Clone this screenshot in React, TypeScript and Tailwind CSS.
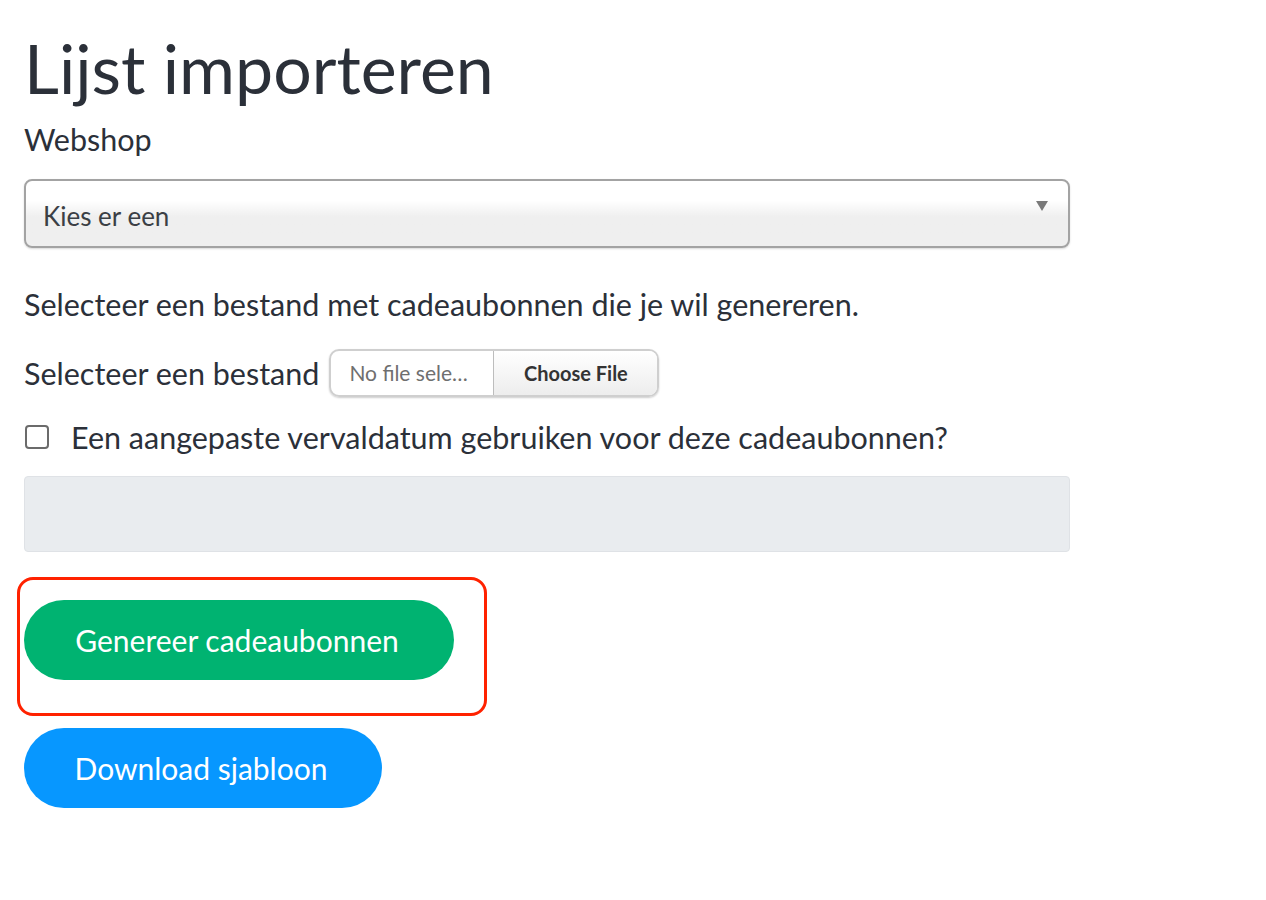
export default function App() {
  return (
    <div className="min-h-[900px] bg-white px-6 pt-[30px] text-[#2b3039]">
      <div className="w-[1046px] font-['Lato','Liberation_Sans',sans-serif]">
        <h1 className="text-[68px] leading-[76px] font-normal">Lijst importeren</h1>

        <label className="mt-[15px] block text-[30.5px] leading-[36px]">Webshop</label>

        <div className="relative mt-[22px] flex h-[69px] items-center rounded-[8px] border-2 border-[#a3a3a3] bg-gradient-to-b from-white from-30% to-[#efefef] to-55% px-[17px] pt-[5px] shadow-[0_1px_2px_rgba(0,0,0,0.15)]">
          <span className="text-[26px] text-[#3b3f45]">Kies er een</span>
          <span className="absolute right-[20px] top-[20px] h-0 w-0 border-x-[6px] border-t-[10px] border-x-transparent border-t-[#7a7a7a]" />
        </div>

        <p className="mt-[38px] text-[30.5px] leading-[36px]">
          Selecteer een bestand met cadeaubonnen die je wil genereren.
        </p>

        <div className="mt-[27px] flex items-center gap-[10px]">
          <span className="text-[30.5px] leading-[36px]">Selecteer een bestand</span>
          <div className="flex h-[48px] w-[330px] overflow-hidden rounded-[10px] border-2 border-[#cfcfcf] shadow-[0_1px_2px_rgba(0,0,0,0.2)]">
            <span className="flex w-[162px] items-center pl-[18px] text-[21px] text-[#6f6f6f]">No file sele…</span>
            <span className="flex flex-1 items-center justify-center border-l border-[#bdbdbd] bg-gradient-to-b from-white to-[#ededed] text-[20px] font-bold text-[#333]">
              Choose File
            </span>
          </div>
        </div>

        <div className="mt-[22px] flex items-center gap-[22px]">
          <span className="ml-px h-[24px] w-[24px] rounded-[4px] border-2 border-[#6b6b6b] bg-white" />
          <span className="text-[30.5px] leading-[36px]">Een aangepaste vervaldatum gebruiken voor deze cadeaubonnen?</span>
        </div>

        <div className="mt-[21px] h-[76px] rounded-[4px] border border-[#dfe2e6] bg-[#e9ecef]" />

        <div className="-ml-[7px] mt-[25px] w-[470px] rounded-[16px] border-[3px] border-[#ff2200] px-[4px] pt-[20px] pb-[33px]">
          <button className="h-[80px] w-[430px] rounded-full bg-[#00b371] pr-[4px] text-[30px] text-white">
            Genereer cadeaubonnen
          </button>
        </div>

        <button className="mt-[12px] h-[80px] w-[358px] rounded-full bg-[#0797ff] pr-[4px] text-[30px] text-white">
          Download sjabloon
        </button>
      </div>
    </div>
  );
}
